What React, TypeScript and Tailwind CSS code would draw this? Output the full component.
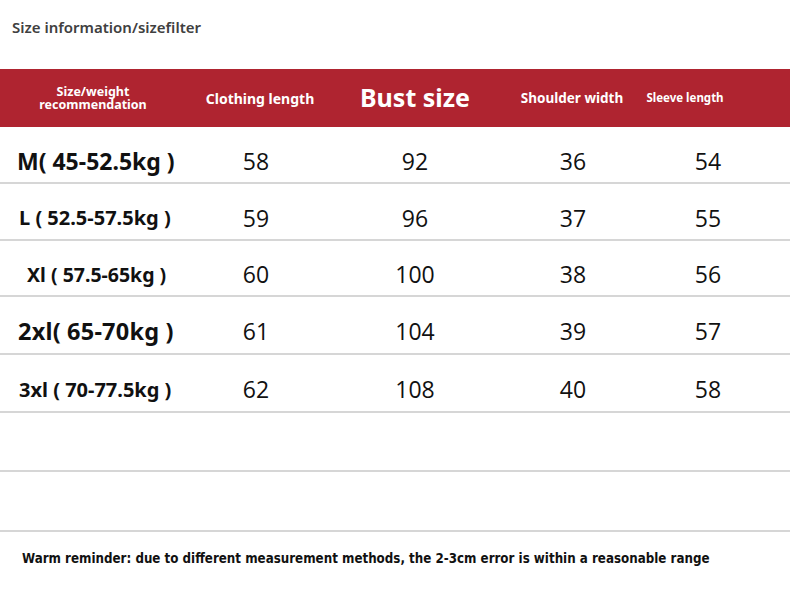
import React from "react";

const rows = [
  { label: "M( 45-52.5kg )", cls: "text-[23px] pl-[17px]", h: "h-[57px]", v: ["58", "92", "36", "54"] },
  { label: "L ( 52.5-57.5kg )", cls: "text-[20px] pl-[19px]", h: "h-[57px]", v: ["59", "96", "37", "55"] },
  { label: "Xl ( 57.5-65kg )", cls: "text-[19.5px] pl-[27px]", h: "h-[56px]", v: ["60", "100", "38", "56"] },
  { label: "2xl( 65-70kg )", cls: "text-[23.5px] pl-[18px] tracking-[0.2px]", h: "h-[58px]", v: ["61", "104", "39", "57"] },
  { label: "3xl ( 70-77.5kg )", cls: "text-[20px] pl-[19px]", h: "h-[58px]", v: ["62", "108", "40", "58"] },
  { label: "", cls: "", h: "h-[59px]", v: ["", "", "", ""] },
  { label: "", cls: "", h: "h-[60px]", v: ["", "", "", ""] },
];

export default function App() {
  return (
    <div className="w-[790px] h-[592px] bg-white overflow-hidden font-['Noto_Sans',sans-serif]">
      <div className="h-[69px] pt-[15px] pl-[12px]">
        <span className="text-[15px] font-semibold text-[#404040]">Size information/sizefilter</span>
      </div>

      {/* header bar */}
      <div className="h-[58px] bg-[#af2430] text-white flex items-center whitespace-nowrap">
        <div className="w-[186px] text-center text-[12.5px] leading-[13px] font-bold">
          Size/weight
          <br />
          recommendation
        </div>
        <div className="w-[148px] flex justify-center text-[14px] font-bold">Clothing length</div>
        <div className="w-[162px] flex justify-center text-[25px] font-bold">Bust size</div>
        <div className="w-[152px] flex justify-center text-[13.5px] font-bold">Shoulder width</div>
        <div className="w-[74px] flex justify-center text-[11.5px] font-bold">Sleeve length</div>
      </div>

      {rows.map((r, i) => (
        <div
          key={i}
          className={`grid grid-cols-[178px_156px_162px_154px_116px] items-center pt-[13px] border-b-2 border-[#d6d6d6] ${r.h}`}
        >
          <div className={`font-bold text-[#111] whitespace-nowrap ${r.cls}`}>{r.label}</div>
          {r.v.map((n, j) => (
            <div key={j} className="text-center text-[23px] text-[#111] font-['Open_Sans',sans-serif]">
              {n}
            </div>
          ))}
        </div>
      ))}

      <div className="pt-[13px] pl-[22px] whitespace-nowrap">
        <div className="inline-block origin-left scale-x-[0.945] text-[14px] font-bold text-[#111] font-['DejaVu_Sans_Condensed',sans-serif]">
          Warm reminder: due to different measurement methods, the 2-3cm error is within a reasonable range
        </div>
      </div>
    </div>
  );
}
